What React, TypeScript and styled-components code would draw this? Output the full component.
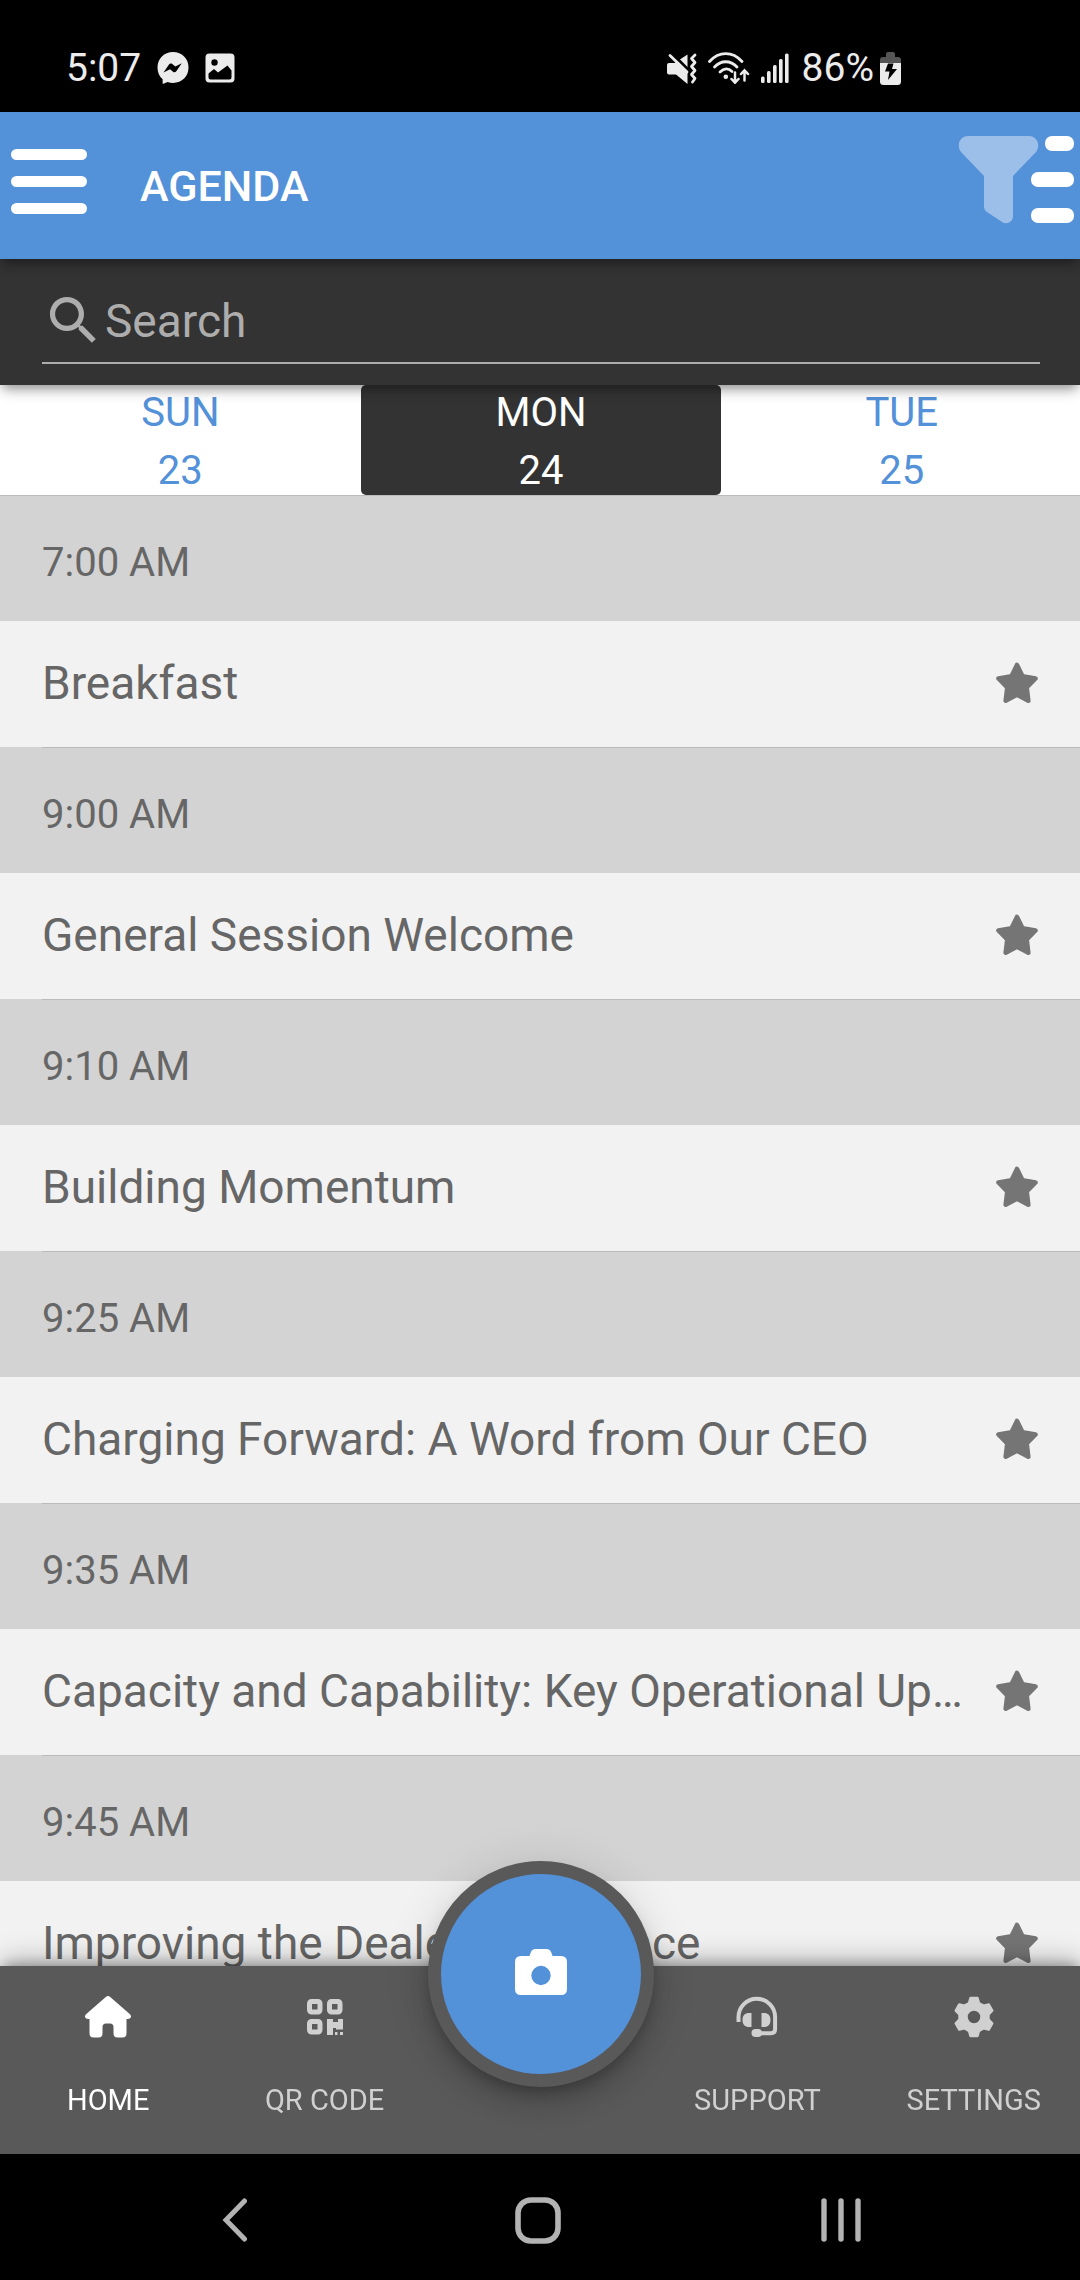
import React, { useState } from "react";
import styled, { createGlobalStyle } from "styled-components";
import { MdSearch } from "react-icons/md";

const color = {
  blue: "#5391d9",
  dark: "#333333",
  bar: "#595959",
  row: "#f2f2f2",
  band: "#d3d3d3",
  line: "#bbbbbb",
  text: "#666666",
  muted: "#d0d0d0",
  status: "#ececec",
};

const GlobalStyle = createGlobalStyle`
  *, *::before, *::after { box-sizing: border-box; }
  body { margin: 0; background: #000; font-family: Roboto, "Liberation Sans", sans-serif; }
  button, input { font: inherit; color: inherit; background: none; border: 0; padding: 0; margin: 0; }
  button { cursor: pointer; }
  svg { display: block; flex: none; }
`;

const Screen = styled.div`
  display: flex;
  flex-direction: column;
  height: 100vh;
  overflow: hidden;
`;

const StatusBar = styled.div`
  display: flex;
  justify-content: space-between;
  align-items: center;
  height: 112px;
  flex: none;
  padding: 24px 179px 0 66px;
  background: #000;
  color: ${color.status};
  font-size: 39px;
  line-height: 46px;
`;

const StatusGroup = styled.div<{ $gap: number }>`
  display: flex;
  align-items: center;
  gap: ${(p) => p.$gap}px;
`;

const Battery = styled.div`
  display: flex;
  align-items: center;
  gap: 6px;
`;

const Header = styled.header`
  position: relative;
  z-index: 3;
  display: flex;
  align-items: center;
  height: 147px;
  flex: none;
  padding: 0 6px 0 11px;
  background: ${color.blue};
  color: #fff;
  box-shadow: 0 5px 10px -3px rgba(0, 0, 0, 0.3), 0 8px 13px -2px rgba(0, 0, 0, 0.2);
`;

const Title = styled.h1`
  flex: 1;
  margin: 0 0 0 53px;
  font-size: 43px;
  line-height: 50px;
  font-weight: 500;
`;

const HeaderButton = styled.button<{ $lift: number }>`
  padding-bottom: ${(p) => p.$lift}px;
`;

const SearchBar = styled.div`
  position: relative;
  z-index: 2;
  flex: none;
  padding: 18px 40px 21px 42px;
  background: ${color.dark};
  box-shadow: 0 5px 10px -3px rgba(0, 0, 0, 0.3), 0 8px 13px -2px rgba(0, 0, 0, 0.2);
`;

const SearchField = styled.label`
  display: flex;
  align-items: center;
  height: 87px;
  padding-top: 2px;
  border-bottom: 2px solid #adadad;
  color: #adadad;
  font-size: 46px;
`;

const SearchInput = styled.input`
  flex: 1;
  min-width: 0;
  height: 60px;
  outline: none;
  &::placeholder { color: #adadad; opacity: 1; }
`;

const Days = styled.div`
  display: grid;
  grid-template-columns: repeat(3, 1fr);
  height: 110px;
  flex: none;
  margin-right: -2px;
  background: #fff;
`;

const Day = styled.button<{ $active: boolean }>`
  display: flex;
  flex-direction: column;
  align-items: center;
  gap: 10px;
  padding-top: 4px;
  border-radius: 5px;
  font-size: 40px;
  line-height: 48px;
  color: ${(p) => (p.$active ? "#fff" : color.blue)};
  background: ${(p) => (p.$active ? color.dark : "transparent")};
`;

const Agenda = styled.main`
  flex: 1;
  min-height: 0;
  overflow-y: auto;
  scrollbar-width: none;
  background: ${color.row};
`;

const TimeHeading = styled.h2<{ $first: boolean }>`
  margin: 0;
  height: 126px;
  background: ${color.band};
  color: ${color.text};
  font-size: 40px;
  font-weight: 400;
  line-height: 116px;
  &::before {
    content: "";
    display: block;
    height: 1px;
    margin-left: ${(p) => (p.$first ? 0 : 42)}px;
    background: ${color.line};
  }
`;

const TimeText = styled.span`
  display: block;
  padding: 9px 42px 0;
`;

const Session = styled.article`
  display: flex;
  align-items: center;
  gap: 20px;
  height: 126px;
  padding: 0 42px 2px;
  color: ${color.text};
`;

const SessionTitle = styled.h3`
  flex: 1;
  min-width: 0;
  margin: 0;
  font-size: 46px;
  line-height: 60px;
  font-weight: 400;
  white-space: nowrap;
  overflow: hidden;
  text-overflow: ellipsis;
`;

const TabBar = styled.nav`
  position: relative;
  z-index: 2;
  display: grid;
  grid-template-columns: repeat(5, 1fr);
  flex: none;
  height: 188px;
  margin-right: -2px;
  background: ${color.bar};
  box-shadow: 0 -5px 12px -4px rgba(0, 0, 0, 0.32), 0 -8px 26px -2px rgba(0, 0, 0, 0.26);
`;

const TabLink = styled.a<{ $active?: boolean }>`
  display: flex;
  flex-direction: column;
  align-items: center;
  gap: 45px;
  padding-top: 30px;
  color: ${(p) => (p.$active ? "#fff" : color.muted)};
  text-decoration: none;
  font-size: 29px;
  line-height: 34px;
`;

const TabIcon = styled.span`
  display: flex;
  align-items: center;
  height: 42px;
`;

const CameraSlot = styled.div`
  position: relative;
`;

const CameraButton = styled.button`
  position: absolute;
  left: 50%;
  top: -105px;
  width: 226px;
  height: 226px;
  margin-left: -113px;
  padding-bottom: 4px;
  display: flex;
  justify-content: center;
  align-items: center;
  border: 13px solid ${color.bar};
  border-radius: 50%;
  background: ${color.blue};
  color: #fff;
  box-shadow: 0 8px 13px -3px rgba(0, 0, 0, 0.2), 0 16px 26px 0 rgba(0, 0, 0, 0.14),
    0 3px 47px 0 rgba(0, 0, 0, 0.12);
`;

const SystemBar = styled.div`
  display: grid;
  grid-template-columns: repeat(3, 1fr);
  flex: none;
  height: 126px;
  padding: 7px 88px 0 83px;
  background: #000;
`;

const SystemButton = styled.button`
  display: flex;
  justify-content: center;
  padding-top: 36px;
`;

const MessengerIcon = () => (
  <svg width="32" height="32" viewBox="0 0 32 32" fill={color.status}>
    <path d="M16 0C7 0 .5 6.500.5 15.500c0 4.800 1.900 9 5.100 11.700L5.700 32l5-2c1.600.6 3.400.9 5.300.9 9 0 15.500-6.500 15.500-15.400S25 0 16 0z" />
    <path d="M6.500 20.500 12 12.500c.8-1.100 2.200-1.300 3.300-.5l3 2.400 6.500-3.200-5.500 8c-.8 1.100-2.200 1.400-3.300.5l-3-2.400z" fill="#000" />
  </svg>
);

const PictureIcon = () => (
  <svg width="30" height="30" viewBox="0 0 30 30">
    <rect x="0.500" y="0.500" width="29" height="29" rx="4" fill={color.status} />
    <circle cx="9.500" cy="9.500" r="3.200" fill="#000" />
    <path d="M3.500 20.500 9 16l4 3.500 9.500-7 4 5V24.500q0 2-2 2h-19q-2 0-2-2z" fill="#000" />
  </svg>
);

const MutedIcon = () => (
  <svg width="30" height="31" viewBox="0 0 30 31">
    <path d="M0 12q0-2 2-2h5.500L20.500 1.500V31L9 21.500H2q-2 0-2-2z" fill={color.status} />
    <path d="M2 -2.500 24 19.500" stroke="#000" strokeWidth="3" />
    <path d="M3 2.500 20 19" stroke={color.status} strokeWidth="2.800" strokeLinecap="round" />
    <path d="M28 2l-3.500 3.500 3.500 4-3.500 4 3.500 4-3.500 4 3.500 4-2.500 3.500" stroke={color.status} strokeWidth="2.800" strokeLinecap="round" strokeLinejoin="round" fill="none" />
  </svg>
);

const WifiIcon = () => (
  <svg width="42" height="32" viewBox="0 0 42 32" fill="none" stroke={color.status} strokeWidth="2.800" strokeLinecap="round">
    <path d="M1.500 9.500C11-1 24.500-1 34 9.500" />
    <path d="M6.500 15c6.500-7 16-7 22.500 0" />
    <path d="M12 20c4-4 8.500-3.900 12-.5" />
    <circle cx="17.800" cy="24.800" r="2.300" fill={color.status} stroke="none" />
    <path d="M27 20.500V30.500M23.500 27l3.500 3.700 3.500-3.700M36.500 28.500V18.500M33 22l3.500-3.700L40 22" strokeWidth="2.500" />
  </svg>
);

const SignalIcon = () => (
  <svg width="30" height="30" viewBox="0 0 30 30" fill={color.status}>
    <rect x="0" y="23.500" width="3.600" height="6.500" rx="1.500" />
    <rect x="6" y="18" width="3.600" height="12" rx="1.500" />
    <rect x="12" y="12" width="3.600" height="18" rx="1.500" />
    <rect x="18" y="6" width="3.600" height="24" rx="1.500" />
    <rect x="24" y="0.500" width="3.600" height="29.500" rx="1.500" />
  </svg>
);

const BatteryIcon = () => (
  <svg width="21" height="33" viewBox="0 0 21 33">
    <path d="M0 11V8q0-3 3-3h3V2q0-2 2-2h5q2 0 2 2v3h3q3 0 3 3v3z" fill="#555" />
    <path d="M0 11h21v18.500q0 3.500-3.500 3.500h-14Q0 33 0 29.500z" fill={color.status} />
    <path d="M8 11.500h5.500L12 17h5L8 28l1.500-8.500H5z" fill="#000" />
  </svg>
);

const MenuIcon = () => (
  <svg width="76" height="66" viewBox="0 0 76 66" fill="currentColor">
    <rect width="76" height="11" rx="5.500" />
    <rect y="27" width="76" height="11" rx="5.500" />
    <rect y="54" width="76" height="11" rx="5.500" />
  </svg>
);

const FilterIcon = () => (
  <svg width="116" height="88" viewBox="0 0 116 88" fill="currentColor">
    <path
      d="M10 0H71C79 0 83 9 78 16L55 40V80C55 86 49 89 44 86L29 76Q26 74 26 71V40L3 16C-2 9 2 0 10 0z"
      opacity="0.42"
    />
    <rect x="87" y="0" width="29" height="15" rx="7" />
    <rect x="73" y="36" width="43" height="15" rx="7" />
    <rect x="73" y="72" width="43" height="15" rx="7" />
  </svg>
);

const StarIcon = () => (
  <svg width="42" height="42" viewBox="0 0 42 42">
    <path
      d="M21 3 26.500 14.300 39.500 16.500 30.700 25.500 32.300 38.700 21 32.800 9.700 38.700 11.300 25.500 2.500 16.500 15.500 14.300z"
      fill="#757575"
      stroke="#757575"
      strokeWidth="4.600"
      strokeLinejoin="round"
    />
  </svg>
);

const HomeIcon = () => (
  <svg width="46" height="42" viewBox="0 0 46 42" fill="currentColor">
    <path d="M20.800 1q2.200-1.800 4.400 0L44.700 18c2.600 2.400 1 5-1.700 5H41.500V37.500q0 4-4 4h-5q-4 0-4-4V31q0-3.500-3.500-3.500H21q-3.500 0-3.500 3.500v6.500q0 4-4 4h-5q-4 0-4-4V23H3C.3 23-1.300 20.400 1.300 18z" />
  </svg>
);

const QrIcon = () => (
  <svg width="36" height="36" viewBox="0 0 36 36" fill="none">
    <g stroke="currentColor" strokeWidth="5">
      <rect x="2.500" y="2.500" width="10.500" height="10.500" rx="2" />
      <rect x="22.500" y="2.500" width="10.500" height="10.500" rx="2" />
      <rect x="2.500" y="22.500" width="10.500" height="10.500" rx="2" />
    </g>
    <path d="M20 20h6v3h5v-3h5v10.500h-7V29h-3v7h-6zM28 33h2.500v3H28zM33 33h3v3h-3z" fill="currentColor" />
  </svg>
);

const HeadsetIcon = () => (
  <svg width="42" height="42" viewBox="0 0 42 42" fill="currentColor">
    <path
      d="M2.500 26V21a18.300 18.300 0 0 1 36.600 0V33q0 4.200-4.200 4.200H22"
      fill="none"
      stroke="currentColor"
      strokeWidth="4"
    />
    <path d="M15.500 17v14H13c-4 0-6.500-2.500-6.500-7s2.500-7 6.500-7zM25.500 17v14H28c4 0 6.500-2.500 6.500-7s-2.500-7-6.500-7z" />
    <rect x="15.500" y="33" width="10.500" height="8" rx="4" />
  </svg>
);

const GearIcon = () => (
  <svg width="42" height="42" viewBox="-21 -21 42 42" fill="currentColor">
    <circle r="11" fill="none" stroke="currentColor" strokeWidth="9.500" />
    {[0, 60, 120, 180, 240, 300].map((angle) => (
      <path
        key={angle}
        d="M-3.500-19H3.500L5.500-12H-5.500z"
        stroke="currentColor"
        strokeWidth="2.500"
        strokeLinejoin="round"
        transform={`rotate(${angle})`}
      />
    ))}
  </svg>
);

const CameraIcon = () => (
  <svg width="52" height="46" viewBox="0 0 52 46" fill="currentColor">
    <path
      fillRule="evenodd"
      d="M6 7h8.500l1-3Q16.800 0 20.500 0h11q3.700 0 5 4l1 3H46q6 0 6 6v27q0 6-6 6H6q-6 0-6-6V13q0-6 6-6zM26 16.800a9.700 9.700 0 1 0 0 19.400a9.700 9.700 0 1 0 0-19.400z"
    />
  </svg>
);

const BackIcon = () => (
  <svg width="26" height="46" viewBox="0 0 26 46" fill="none" stroke="#b3b3b3" strokeWidth="5" strokeLinecap="round" strokeLinejoin="miter">
    <path d="M22.500 4 4 23 22.500 42" />
  </svg>
);

const OverviewIcon = () => (
  <svg width="46" height="48" viewBox="0 0 46 48">
    <rect x="3" y="3" width="40" height="41" rx="13" fill="none" stroke="#b3b3b3" strokeWidth="5.600" />
  </svg>
);

const RecentsIcon = () => (
  <svg width="42" height="46" viewBox="0 0 42 46" stroke="#b3b3b3" strokeWidth="5.400" strokeLinecap="round">
    <path d="M4 4v38M21 4v38M38 4v38" />
  </svg>
);

const days = [
  { name: "SUN", date: 23 },
  { name: "MON", date: 24 },
  { name: "TUE", date: 25 },
];

const sessions = [
  { time: "7:00 AM", title: "Breakfast" },
  { time: "9:00 AM", title: "General Session Welcome" },
  { time: "9:10 AM", title: "Building Momentum" },
  { time: "9:25 AM", title: "Charging Forward: A Word from Our CEO" },
  { time: "9:35 AM", title: "Capacity and Capability: Key Operational Updates" },
  { time: "9:45 AM", title: "Improving the Dealer Experience" },
];

export default function App() {
  const [day, setDay] = useState(24);
  return (
    <>
      <GlobalStyle />
      <Screen>
        <StatusBar>
          <StatusGroup $gap={16}>
            <span>5:07</span>
            <MessengerIcon />
            <PictureIcon />
          </StatusGroup>
          <StatusGroup $gap={11}>
            <MutedIcon />
            <WifiIcon />
            <SignalIcon />
            <Battery>
              <span>86%</span>
              <BatteryIcon />
            </Battery>
          </StatusGroup>
        </StatusBar>
        <Header>
          <HeaderButton type="button" aria-label="Menu" $lift={8}>
            <MenuIcon />
          </HeaderButton>
          <Title>AGENDA</Title>
          <HeaderButton type="button" aria-label="Filter" $lift={12}>
            <FilterIcon />
          </HeaderButton>
        </Header>
        <SearchBar>
          <SearchField>
            <MdSearch size={63} aria-hidden="true" />
            <SearchInput type="text" placeholder="Search" aria-label="Search" />
          </SearchField>
        </SearchBar>
        <Days>
          {days.map((d) => (
            <Day
              key={d.date}
              type="button"
              $active={d.date === day}
              aria-pressed={d.date === day}
              onClick={() => setDay(d.date)}
            >
              <span>{d.name}</span>
              <span>{d.date}</span>
            </Day>
          ))}
        </Days>
        <Agenda>
          {sessions.map((s, i) => (
            <section key={s.time}>
              <TimeHeading $first={i === 0}>
                <TimeText>{s.time}</TimeText>
              </TimeHeading>
              <Session>
                <SessionTitle>{s.title}</SessionTitle>
                <button type="button" aria-label={`Favorite ${s.title}`}>
                  <StarIcon />
                </button>
              </Session>
            </section>
          ))}
        </Agenda>
        <TabBar>
          <TabLink href="#home" $active>
            <TabIcon><HomeIcon /></TabIcon>
            <span>HOME</span>
          </TabLink>
          <TabLink href="#qr-code">
            <TabIcon><QrIcon /></TabIcon>
            <span>QR CODE</span>
          </TabLink>
          <CameraSlot>
            <CameraButton type="button" aria-label="Camera">
              <CameraIcon />
            </CameraButton>
          </CameraSlot>
          <TabLink href="#support">
            <TabIcon><HeadsetIcon /></TabIcon>
            <span>SUPPORT</span>
          </TabLink>
          <TabLink href="#settings">
            <TabIcon><GearIcon /></TabIcon>
            <span>SETTINGS</span>
          </TabLink>
        </TabBar>
        <SystemBar>
          <SystemButton type="button" aria-label="Back"><BackIcon /></SystemButton>
          <SystemButton type="button" aria-label="Home screen"><OverviewIcon /></SystemButton>
          <SystemButton type="button" aria-label="Recent apps"><RecentsIcon /></SystemButton>
        </SystemBar>
      </Screen>
    </>
  );
}
